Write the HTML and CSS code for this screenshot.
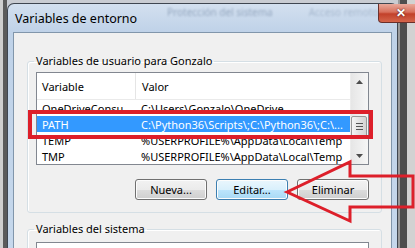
FILE: index.html
```html
<!DOCTYPE html>
<html lang="es">
<head>
    <meta charset="UTF-8">
    <meta name="viewport" content="width=device-width, initial-scale=1.0">
    <title>Variables de entorno</title>
    <link rel="stylesheet" href="styles.css">
</head>
<body>
    <div class="desk">
        <div class="window">
            <div class="titlebar">
                <span class="title">Variables de entorno</span>
                <span class="ghost">Protección del sistema</span>
                <span class="ghost ghost-far">Acceso remoto</span>
                <button class="close" type="button">✕</button>
            </div>
            <div class="client">
                <fieldset class="group">
                    <legend>Variables de usuario para Gonzalo</legend>
                    <div class="list">
                        <div class="list-body">
                            <div class="list-head">
                                <span class="col-name">Variable</span>
                                <span class="col-value">Valor</span>
                            </div>
                            <div class="row">
                                <span class="col-name">OneDriveConsu</span>
                                <span class="col-value">C:\Users\Gonzalo\OneDrive</span>
                            </div>
                            <div class="row selected">
                                <span class="col-name">PATH</span>
                                <span class="col-value">C:\Python36\Scripts\;C:\Python36\;C:\...</span>
                            </div>
                            <div class="row">
                                <span class="col-name">TEMP</span>
                                <span class="col-value">%USERPROFILE%\AppData\Local\Temp</span>
                            </div>
                            <div class="row">
                                <span class="col-name">TMP</span>
                                <span class="col-value">%USERPROFILE%\AppData\Local\Temp</span>
                            </div>
                        </div>
                        <div class="scrollbar">
                            <div class="scroll-btn">
                                <svg width="7" height="4" viewBox="0 0 7 4"><path d="M0 4 L3.5 0 L7 4 Z" fill="#4d4d4d"/></svg>
                            </div>
                            <div class="scroll-track">
                                <div class="thumb"><span></span><span></span><span></span></div>
                            </div>
                            <div class="scroll-btn">
                                <svg width="7" height="4" viewBox="0 0 7 4"><path d="M0 0 L3.5 4 L7 0 Z" fill="#4d4d4d"/></svg>
                            </div>
                        </div>
                    </div>
                    <div class="buttons">
                        <button class="btn" type="button">Nueva...</button>
                        <button class="btn btn-focus" type="button">Editar...</button>
                        <button class="btn" type="button">Eliminar</button>
                    </div>
                </fieldset>
                <fieldset class="group">
                    <legend>Variables del sistema</legend>
                    <div class="list list-system"></div>
                </fieldset>
            </div>
        </div>

        <!-- red marks drawn over the dialog -->
        <div class="mark"></div>
        <svg class="arrow" width="415" height="248" viewBox="0 0 415 248">
            <polygon points="287,192 350,162 350,176 413,176 413,207 350,207 350,221" fill="none" stroke="#dd1f2a" stroke-width="3"/>
        </svg>
    </div>
</body>
</html>
```

FILE: styles.css
```css
body {
    margin: 0;
    font-family: "Noto Sans", sans-serif;
    font-size: 11px;
    color: #000;
}

.desk {
    position: relative;
    width: 415px;
    height: 248px;
    overflow: hidden;
    box-sizing: border-box;
    padding: 3px 0 0 7px;
    background:
        linear-gradient(to right, #cfcfcf 0 3px, #5b5b5b 3px 7px, transparent 7px 398px, #9a9a9a 398px 400px, #4d4d4d 400px 407px, #d2d2d2 407px),
        #c9ccd2;
}

.window {
    width: 391px;
    height: 260px;
    box-sizing: border-box;
    border: 1px solid #3f4650;
    border-bottom: none;
    border-radius: 7px 7px 0 0;
    padding: 0 5px;
    background: linear-gradient(#d3e0ef, #bfd2e8 28px, #c6d8ec);
}

/* Title bar */
.titlebar {
    height: 28px;
    display: flex;
    align-items: flex-start;
}

.title {
    align-self: center;
    padding: 0 0 0 2px;
    font-size: 12.5px;
    color: #000;
    width: 140px;
    flex-shrink: 0;
}

.ghost {
    white-space: nowrap;
    line-height: 16px;
    font-size: 10px;
    color: #6d83a0;
    filter: blur(1.2px);
    opacity: 0.6;
    margin-left: 12px;
}

.ghost-far {
    margin-left: 36px;
    opacity: 0.4;
}

.close {
    margin-left: auto;
    flex-shrink: 0;
    width: 45px;
    height: 19px;
    padding: 0;
    border: 1px solid #6a2f2a;
    border-top: none;
    border-radius: 0 0 4px 4px;
    background: linear-gradient(#e9a99b, #d8705c 45%, #c2412a 55%, #d4654b);
    color: #fff;
    font-size: 12px;
    font-weight: bold;
    text-shadow: 0 0 2px #3a0f08;
    line-height: 17px;
}

/* Client area */
.client {
    height: 230px;
    box-sizing: border-box;
    border: 1px solid #8196ab;
    background: #f0f0f0;
    padding: 20px 9px 0 13px;
}

.group {
    margin: 0 0 8px;
    padding: 3px 12px 12px 8px;
    border: 1px solid #d5dfe5;
    border-radius: 3px;
    box-shadow: inset 1px 1px 0 #fff;
}

.group legend {
    padding: 0 2px;
    margin-left: -2px;
    line-height: 16px;
}

/* List view */
.list {
    display: flex;
    height: 93px;
    box-sizing: border-box;
    border: 1px solid #828790;
    background: #fff;
}

.list-body {
    flex: 1;
    overflow: hidden;
}

.list-head {
    display: flex;
    height: 26px;
    align-items: center;
    border-bottom: 1px solid #eaeaea;
}

.list-head .col-name {
    border-right: 1px solid #e5e5e5;
    align-self: stretch;
    display: flex;
    align-items: center;
}

.row {
    display: flex;
    height: 16px;
    align-items: center;
    white-space: nowrap;
}

.col-name {
    width: 93px;
    padding-left: 5px;
    flex-shrink: 0;
}

.col-value {
    padding-left: 6px;
}

.selected {
    background: #3399ff;
    color: #fff;
}

/* Scroll bar */
.scrollbar {
    width: 17px;
    display: flex;
    flex-direction: column;
    background: linear-gradient(to right, #e6e6e6, #f6f6f6);
    border-left: 1px solid #ececec;
}

.scroll-btn {
    height: 17px;
    display: flex;
    align-items: center;
    justify-content: center;
}

.scroll-track {
    flex: 1;
}

.thumb {
    margin: 26px 1px 0 0;
    height: 21px;
    box-sizing: border-box;
    border: 1px solid #979797;
    border-radius: 2px;
    background: linear-gradient(to right, #f4f4f4, #e2e2e2 50%, #d4d4d4);
    display: flex;
    flex-direction: column;
    align-items: center;
    justify-content: center;
    gap: 2px;
}

.thumb span {
    width: 7px;
    height: 1px;
    background: #555;
}

/* Buttons */
.buttons {
    display: flex;
    justify-content: flex-end;
    gap: 9px;
    margin-top: 14px;
}

.btn {
    width: 72px;
    height: 21px;
    padding: 0;
    font-family: inherit;
    font-size: 11px;
    color: #000;
    border: 1px solid #707070;
    border-radius: 3px;
    background: linear-gradient(#f2f2f2, #ebebeb 50%, #dddddd 50%, #cfcfcf);
    box-shadow: inset 0 0 0 1px #fcfcfc;
}

.btn-focus {
    border-color: #3c7fb1;
    background: linear-gradient(#eaf6fd, #d9f0fc 50%, #bee6fd 50%, #a7d9f5);
}

.list-system {
    height: 20px;
    margin-top: 2px;
}

/* Overlays */
.mark {
    position: absolute;
    left: 28px;
    top: 110px;
    width: 345px;
    height: 29px;
    box-sizing: border-box;
    border: 4px solid #dd1f2a;
}

.arrow {
    position: absolute;
    left: 0;
    top: 0;
    pointer-events: none;
}
```
